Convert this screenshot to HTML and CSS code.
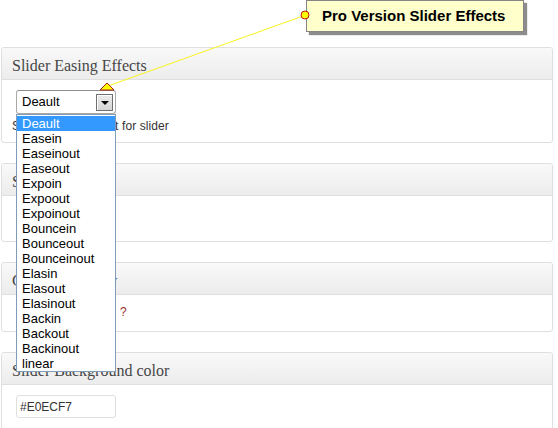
FILE: index.html
```html
<!DOCTYPE html>
<html>
<head>
<meta charset="utf-8">
<link rel="stylesheet" href="styles.css">
</head>
<body>
<div class="page">
  <div class="panel">
    <h3 class="panel-head">Slider Easing Effects</h3>
    <div class="panel-body easing-body">
      <div class="select">
        <span class="select-value">Deault</span>
        <span class="select-btn"><span class="arrow"></span></span>
        <ul class="select-list">
          <li class="selected">Deault</li>
          <li>Easein</li>
          <li>Easeinout</li>
          <li>Easeout</li>
          <li>Expoin</li>
          <li>Expoout</li>
          <li>Expoinout</li>
          <li>Bouncein</li>
          <li>Bounceout</li>
          <li>Bounceinout</li>
          <li>Elasin</li>
          <li>Elasout</li>
          <li>Elasinout</li>
          <li>Backin</li>
          <li>Backout</li>
          <li>Backinout</li>
          <li>linear</li>
        </ul>
      </div>
      <p class="desc">Select easing effect for slider</p>
    </div>
  </div>

  <div class="panel">
    <h3 class="panel-head">Slider Speed</h3>
    <div class="panel-body speed-body">
      <input class="field" type="text" value="500">
    </div>
  </div>

  <div class="panel">
    <h3 class="panel-head">Caption Opacity</h3>
    <div class="panel-body caption-body">
      <div class="row">
        <span class="row-label">Show caption</span>
        <span class="help">?</span>
      </div>
    </div>
  </div>

  <div class="panel">
    <h3 class="panel-head">Slider Background color</h3>
    <div class="panel-body color-body">
      <input class="field" type="text" value="#E0ECF7">
    </div>
  </div>

  <div class="callout">Pro Version Slider Effects</div>
  <svg class="pointer" width="558" height="100" viewBox="0 0 558 100">
    <line x1="303" y1="16" x2="108" y2="86" stroke="#f7f31c" stroke-width="1"/>
    <polygon points="100,90 114,90 107,83" fill="#ffff00" stroke="#a81a1a" stroke-width="1" stroke-linejoin="round"/>
    <circle cx="305" cy="15" r="4" fill="#ffff00" stroke="#c0141a" stroke-width="1"/>
  </svg>
</div>
</body>
</html>
```

FILE: styles.css
```css
html, body {
  margin: 0;
  background: #fff;
}

body {
  font-family: "Liberation Sans", Arial, sans-serif;
  color: #333;
}

.page {
  position: relative;
  padding: 47px 5px 40px 1px;
}

.panel {
  border: 1px solid #dfdfdf;
  border-radius: 3px;
  background: #fff;
  margin-bottom: 20px;
}

.panel-head {
  margin: 0;
  padding: 8px 10px 4px 10px;
  font: normal 16px/19px "Liberation Serif", "Times New Roman", serif;
  color: #464646;
  background: linear-gradient(#f9f9f9, #ececec);
  border-bottom: 1px solid #dfdfdf;
  border-radius: 3px 3px 0 0;
}

.panel-body {
  padding: 10px 10px 8px 10px;
}

.speed-body {
  padding: 10px 10px 12px 10px;
}

.caption-body {
  padding: 9px 10px 11px 10px;
}

.color-body {
  padding: 10px 10px 14px 10px;
}

/* fake select */
.select {
  position: relative;
  margin-left: 4px;
  width: 100px;
  height: 24px;
  box-sizing: border-box;
  border: 1px solid #a9a9a9;
  border-top-color: #8e8e8e;
  border-radius: 3px;
  background: #fff;
  display: flex;
  align-items: center;
  justify-content: space-between;
  padding: 0 2px 0 5px;
  font-size: 13px;
  line-height: 22px;
  color: #000;
}

.select-btn {
  width: 17px;
  height: 17px;
  box-sizing: border-box;
  border: 1px solid #6f6f6f;
  background: linear-gradient(#ececec, #d4d4d4);
  box-shadow: inset 1px 1px 0 #fff;
  display: flex;
  align-items: center;
  justify-content: center;
}

.arrow {
  width: 0;
  height: 0;
  border-left: 4px solid transparent;
  border-right: 4px solid transparent;
  border-top: 4px solid #000;
  margin-top: 1px;
}

.select-list {
  position: absolute;
  top: 23px;
  left: -1px;
  width: 100px;
  box-sizing: border-box;
  margin: 0;
  padding: 1px 0 0 0;
  list-style: none;
  border: 1px solid #7f9db9;
  background: #fff;
  z-index: 10;
}

.select-list li {
  font-size: 13px;
  line-height: 15px;
  padding-left: 5px;
  color: #000;
}

.select-list li.selected {
  background: #3399ff;
  color: #fff;
}

.desc {
  margin: 4px 0 0 0;
  font-size: 12px;
  line-height: 16px;
  letter-spacing: 0.1px;
  color: #333;
}

.field {
  display: block;
  margin: 0 0 0 4px;
  width: 100px;
  height: 23px;
  box-sizing: border-box;
  border: 1px solid #dfdfdf;
  border-radius: 3px;
  padding: 0 0 0 3px;
  font: 12px "Liberation Sans", Arial, sans-serif;
  color: #333;
  background: #fff;
}

.row {
  display: flex;
  font-size: 12px;
  line-height: 16px;
}

.row-label {
  width: 102px;
  margin-left: 6px;
}

.help {
  color: #9b2b2b;
}

.callout {
  position: absolute;
  top: 0;
  left: 306px;
  width: 218px;
  height: 32px;
  box-sizing: border-box;
  border: 1px solid #868686;
  background: #ffffcc;
  box-shadow: 3px 3px 1px rgba(0, 0, 0, 0.45);
  font: bold 15px/30px "Liberation Sans", Arial, sans-serif;
  color: #000;
  padding-left: 15px;
  z-index: 14;
}

.pointer {
  position: absolute;
  top: 0;
  left: 0;
  z-index: 15;
  pointer-events: none;
}
```
